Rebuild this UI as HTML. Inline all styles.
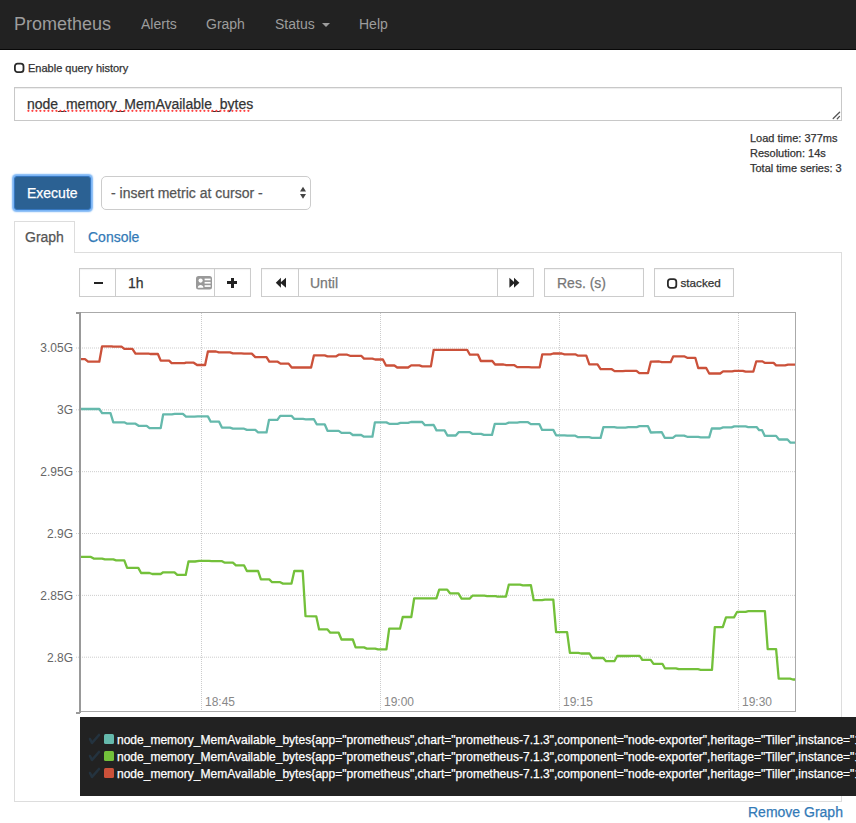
<!DOCTYPE html>
<html><head><meta charset="utf-8">
<style>
*{box-sizing:border-box;margin:0;padding:0}
html,body{width:856px;height:823px;overflow:hidden;background:#fff;font-family:"Liberation Sans",sans-serif;color:#333}
.a{-webkit-text-stroke:0.25px currentColor}
.ns{-webkit-text-stroke:0}
.a{position:absolute;white-space:nowrap}
#nav .a{-webkit-text-stroke:0}
#nav{position:absolute;left:0;top:0;width:856px;height:50px;background:#222;border-bottom:1px solid #080808}
.nl{position:absolute;font-size:14px;line-height:16px;color:#9d9d9d;top:16px}
.box{position:absolute;border:1px solid #ccc;background:#fff;box-shadow:inset 0 1px 1px rgba(0,0,0,.05)}
.t14{font-size:14px;line-height:16px}
.t11{font-size:11px;line-height:15px}
.t12{font-size:12px;line-height:14px}
</style></head><body>
<div id="nav">
  <div class="a" style="left:14px;top:14px;font-size:18px;line-height:20px;color:#9d9d9d">Prometheus</div>
  <div class="nl a" style="left:141px">Alerts</div>
  <div class="nl a" style="left:206px">Graph</div>
  <div class="nl a" style="left:275px">Status</div>
  <div class="a" style="left:322px;top:23px;width:0;height:0;border-left:4px solid transparent;border-right:4px solid transparent;border-top:4px solid #9d9d9d"></div>
  <div class="nl a" style="left:359px">Help</div>
</div>

<!-- query history checkbox -->
<svg class="a" style="left:13px;top:62px" width="13" height="13"><rect x="1.9" y="1.6" width="8.6" height="8.6" rx="2.6" fill="none" stroke="#2a2a2a" stroke-width="1.8"/></svg>
<div class="a t11" style="left:28px;top:61px">Enable query history</div>

<!-- textarea -->
<div class="box" style="left:14px;top:87px;width:828px;height:34px;border-color:#c8c8c8;box-shadow:inset 0 1px 1px rgba(0,0,0,.075)"></div>
<div class="a t14" style="left:27px;top:96px;color:#333">node_memory_MemAvailable_bytes</div>
<svg class="a" style="left:826px;top:106px" width="16" height="16"><g stroke="#555" stroke-width="1.3" stroke-linecap="round"><path d="M7.2,12.5 L13.6,6.3"/><path d="M11.3,12.7 L13.5,10.4"/></g></svg>
<svg class="a" style="left:26px;top:108px" width="230" height="6"><line x1="2.4" y1="2.8" x2="224" y2="2.8" stroke="#f44" stroke-width="2.2" stroke-linecap="round" stroke-dasharray="0,4"/></svg>

<!-- load info -->
<div class="a t11" style="left:750px;top:131px">Load time: 377ms</div>
<div class="a t11" style="left:750px;top:146px">Resolution: 14s</div>
<div class="a t11" style="left:750px;top:161px">Total time series: 3</div>

<!-- execute -->
<div class="a" style="left:14px;top:176px;width:77px;height:34px;background:#2b6193;border:1px solid #3677c0;border-radius:3px;box-shadow:0 0 1.5px 1.5px #79b4f5"></div>
<div class="a t14" style="left:27px;top:185px;color:#fff">Execute</div>

<!-- select -->
<div class="box" style="left:101px;top:176px;width:210px;height:34px;border-radius:5px;box-shadow:none"></div>
<div class="a t14" style="left:111px;top:185px;color:#555">- insert metric at cursor -</div>
<svg class="a" style="left:296px;top:184px" width="14" height="18"><path d="M4,7.6 L7,2.8 L10,7.6 Z M4,9.9 L10,9.9 L7,14.8 Z" fill="#444"/></svg>

<!-- tabs -->
<div class="a" style="left:14px;top:252px;width:828px;height:550px;border:1px solid #ddd"></div>
<div class="a" style="left:14px;top:221px;width:61px;height:32px;border:1px solid #ddd;border-bottom:0;background:#fff"></div>
<div class="a t14" style="left:25px;top:229px;color:#555">Graph</div>
<div class="a t14" style="left:88px;top:229px;color:#337ab7">Console</div>

<!-- controls -->
<div class="box" style="left:79px;top:268px;width:172px;height:29px"></div>
<div class="a" style="left:115px;top:268px;width:1px;height:29px;background:#ccc"></div>
<div class="a" style="left:214px;top:268px;width:1px;height:29px;background:#ccc"></div>
<div class="a t14" style="left:128px;top:275px;color:#333">1h</div>


<div class="box" style="left:261px;top:268px;width:273px;height:29px"></div>
<div class="a" style="left:298px;top:268px;width:1px;height:29px;background:#ccc"></div>
<div class="a" style="left:497px;top:268px;width:1px;height:29px;background:#ccc"></div>
<div class="a t14" style="left:310px;top:275px;color:#777">Until</div>

<div class="box" style="left:544px;top:268px;width:100px;height:29px"></div>
<div class="a t14" style="left:557px;top:275px;color:#777">Res. (s)</div>

<div class="box" style="left:654px;top:268px;width:80px;height:29px"></div>
<svg class="a" style="left:666px;top:277px" width="13" height="13"><rect x="1.9" y="2.2" width="8.4" height="8.6" rx="2.6" fill="none" stroke="#2a2a2a" stroke-width="1.8"/></svg>
<div class="a t11" style="left:680.5px;top:275px;font-size:11.7px">stacked</div>
<div class="a" style="left:94px;top:281.5px;width:8.5px;height:2.8px;background:#222"></div>
<div class="a" style="left:227.3px;top:281.4px;width:10px;height:2.8px;background:#222"></div>
<div class="a" style="left:231.2px;top:277.8px;width:2.8px;height:10px;background:#222"></div>
<svg class="a" style="left:196px;top:276px" width="16" height="14"><rect x="0" y="0" width="16" height="13.4" rx="2.5" fill="#999"/><circle cx="4.6" cy="4.6" r="2.1" fill="#fff"/><path d="M1.8,11.8 C1.8,8.2 7.4,8.2 7.4,11.8 Z" fill="#fff"/><rect x="8.6" y="2.6" width="6" height="1.7" fill="#fff"/><rect x="8.6" y="5.9" width="6" height="1.7" fill="#fff"/><rect x="8.6" y="9.2" width="6" height="1.7" fill="#fff"/></svg>
<svg class="a" style="left:275px;top:277px" width="12" height="12"><path d="M0.8,5.8 L5.9,0.8 L5.9,10.8 Z M5.2,5.8 L11,0.8 L11,10.8 Z" fill="#222"/></svg>
<svg class="a" style="left:509px;top:277px" width="12" height="12"><path d="M0.4,0.8 L5.9,5.8 L0.4,10.8 Z M5,0.8 L10.4,5.8 L5,10.8 Z" fill="#222"/></svg>

<!-- chart -->
<!--CHART--><svg class="a" style="left:0;top:0" width="856" height="823">
<line x1="76" y1="348.00" x2="796" y2="348.00" stroke="#000" stroke-opacity="0.2" stroke-width="1" stroke-dasharray="1,1" fill="none"/>
<line x1="76" y1="409.84" x2="796" y2="409.84" stroke="#000" stroke-opacity="0.2" stroke-width="1" stroke-dasharray="1,1" fill="none"/>
<line x1="76" y1="471.68" x2="796" y2="471.68" stroke="#000" stroke-opacity="0.2" stroke-width="1" stroke-dasharray="1,1" fill="none"/>
<line x1="76" y1="533.52" x2="796" y2="533.52" stroke="#000" stroke-opacity="0.2" stroke-width="1" stroke-dasharray="1,1" fill="none"/>
<line x1="76" y1="595.36" x2="796" y2="595.36" stroke="#000" stroke-opacity="0.2" stroke-width="1" stroke-dasharray="1,1" fill="none"/>
<line x1="76" y1="657.20" x2="796" y2="657.20" stroke="#000" stroke-opacity="0.2" stroke-width="1" stroke-dasharray="1,1" fill="none"/>
<line x1="201.5" y1="313" x2="201.5" y2="711" stroke="#000" stroke-opacity="0.2" stroke-width="1" stroke-dasharray="1,1" fill="none"/>
<line x1="380.5" y1="313" x2="380.5" y2="711" stroke="#000" stroke-opacity="0.2" stroke-width="1" stroke-dasharray="1,1" fill="none"/>
<line x1="559.5" y1="313" x2="559.5" y2="711" stroke="#000" stroke-opacity="0.2" stroke-width="1" stroke-dasharray="1,1" fill="none"/>
<line x1="738.5" y1="313" x2="738.5" y2="711" stroke="#000" stroke-opacity="0.2" stroke-width="1" stroke-dasharray="1,1" fill="none"/>
<rect x="79.5" y="312.5" width="716" height="399" fill="none" stroke="#aaa" stroke-width="1"/>
<rect x="79" y="312" width="2" height="401" fill="#999"/>
<rect x="76" y="312" width="4" height="2" fill="#999"/>
<rect x="76" y="712" width="4" height="2" fill="#999"/>
<clipPath id="cp"><rect x="81" y="313" width="714" height="398"/></clipPath>
<g clip-path="url(#cp)" fill="none" stroke-width="2.3" stroke-linejoin="round">
<path d="M80.1,359.2 L85.0,359.2 L88.1,361.7 L99.3,361.7 L102.1,346.3 L111.6,346.3 L113.0,346.7 L121.5,346.7 L124.3,348.8 L132.4,348.8 L135.5,353.7 L148.8,353.7 L150.2,354.0 L157.9,354.0 L160.7,360.6 L169.1,360.6 L171.6,363.1 L184.5,363.1 L186.0,362.7 L193.7,362.7 L197.1,365.0 L205.1,365.0 L207.9,351.5 L216.0,351.5 L218.8,352.3 L230.0,352.3 L232.9,353.3 L241.3,353.3 L244.1,353.6 L251.8,353.6 L255.3,357.1 L266.5,357.1 L269.3,361.7 L277.7,361.7 L280.5,363.6 L288.6,363.6 L291.7,367.5 L311.1,367.5 L313.9,355.4 L324.7,355.4 L327.5,356.4 L335.9,356.4 L338.7,354.7 L347.2,354.7 L350.0,355.8 L361.2,355.8 L364.0,358.6 L372.4,358.6 L375.2,359.5 L382.9,359.5 L386.0,365.5 L394.4,365.5 L397.2,367.5 L408.1,367.5 L411.2,365.4 L419.4,365.4 L422.2,366.4 L430.9,366.4 L433.7,349.8 L467.1,349.8 L469.9,354.7 L478.0,354.7 L480.8,361.0 L492.3,361.0 L495.1,364.5 L503.5,364.5 L506.3,365.2 L514.4,365.2 L517.2,367.1 L528.7,367.1 L531.5,367.3 L539.7,367.3 L542.3,354.3 L550.5,354.3 L553.3,353.5 L561.7,353.5 L564.5,354.3 L575.3,354.3 L578.1,355.7 L586.3,355.7 L589.3,364.3 L597.5,364.3 L600.6,369.2 L611.8,369.2 L614.6,371.1 L622.7,371.1 L625.5,370.8 L636.5,370.8 L639.3,373.1 L648.0,373.1 L650.8,361.7 L659.2,361.5 L661.8,362.2 L670.6,362.2 L673.3,356.3 L684.1,356.3 L687.2,357.8 L695.3,357.8 L698.2,368.0 L706.2,368.0 L709.2,373.5 L720.2,373.5 L723.1,371.3 L732.1,371.3 L734.6,370.8 L742.8,370.8 L745.6,371.7 L753.3,371.7 L756.3,361.3 L762.1,361.3 L765.1,362.9 L773.6,362.9 L776.1,365.4 L785.1,365.4 L788.0,364.7 L796.0,364.7" stroke="#cb513a"/>
<path d="M80.1,409.0 L99.3,409.0 L102.1,413.2 L110.5,413.2 L113.3,422.3 L124.3,422.3 L127.1,423.7 L135.5,423.7 L138.6,425.8 L146.7,425.8 L149.5,428.1 L160.7,428.1 L163.2,414.3 L171.9,414.3 L174.7,413.9 L182.9,413.9 L186.0,416.7 L194.4,416.7 L197.8,416.4 L207.9,416.4 L210.7,421.7 L219.1,421.7 L221.9,427.6 L230.0,427.6 L232.9,428.7 L244.1,428.7 L246.9,429.9 L255.3,429.9 L258.1,432.4 L266.5,432.4 L269.0,419.9 L277.4,419.9 L280.2,415.8 L291.5,415.8 L294.3,418.9 L303.0,418.9 L305.8,419.3 L313.9,419.2 L316.7,424.3 L324.7,424.3 L327.5,430.8 L338.7,430.8 L341.5,432.9 L350.0,432.9 L352.8,435.0 L361.2,435.0 L364.0,436.7 L372.4,436.7 L374.9,422.4 L386.4,422.4 L389.2,423.8 L397.6,423.8 L400.4,422.9 L408.1,422.9 L410.9,422.0 L422.2,422.0 L425.0,425.2 L433.7,425.0 L436.5,430.4 L444.6,430.4 L447.4,435.5 L455.8,435.5 L458.6,432.2 L469.9,432.2 L472.7,433.9 L481.1,433.9 L483.9,434.9 L492.0,434.9 L494.8,423.8 L506.0,423.8 L508.8,422.6 L517.2,422.6 L520.0,422.2 L528.0,422.2 L530.8,424.1 L539.3,424.1 L542.1,429.9 L553.3,429.9 L556.1,435.3 L564.5,435.3 L567.3,435.7 L575.3,435.7 L578.1,437.2 L589.1,437.2 L591.9,437.9 L600.6,437.9 L603.4,427.1 L614.3,427.1 L617.1,427.6 L625.5,427.6 L628.3,427.2 L636.7,427.2 L639.5,426.2 L648.0,426.2 L650.8,432.5 L661.8,432.2 L664.7,437.8 L672.8,437.8 L675.7,435.6 L684.1,435.6 L687.2,436.8 L698.2,436.8 L700.7,437.3 L709.2,437.3 L711.8,428.5 L720.2,428.5 L723.1,427.4 L731.6,427.4 L734.3,426.4 L745.6,426.4 L748.2,427.1 L756.6,427.1 L759.2,430.2 L762.1,430.2 L764.8,435.9 L776.1,435.9 L779.0,439.5 L787.5,439.5 L790.5,442.7 L796.0,442.7" stroke="#65b9ac"/>
<path d="M80.1,556.9 L90.9,556.9 L93.7,558.6 L102.1,558.6 L104.9,559.4 L113.3,559.4 L116.1,560.4 L124.3,560.4 L127.1,567.9 L138.3,567.9 L141.1,573.0 L149.5,573.0 L152.3,574.0 L160.7,574.0 L163.2,572.3 L174.5,572.3 L177.3,574.9 L185.7,574.9 L188.5,561.4 L195.0,561.5 L199.2,560.8 L209.0,560.8 L211.8,561.1 L221.6,561.1 L224.4,562.6 L232.9,562.6 L235.9,565.4 L244.1,565.4 L246.9,571.0 L258.1,571.0 L260.9,579.4 L269.3,579.4 L272.1,582.2 L280.2,582.2 L283.0,583.6 L291.5,583.6 L294.3,571.0 L302.7,571.0 L305.5,616.2 L316.3,616.4 L319.1,629.4 L327.5,629.4 L330.3,632.7 L338.7,632.7 L341.5,639.5 L352.8,639.5 L355.6,647.4 L364.0,647.4 L366.8,648.6 L375.2,648.6 L378.0,649.3 L386.4,649.3 L389.2,628.7 L400.0,628.7 L402.8,616.8 L411.3,617.0 L414.2,598.3 L436.4,598.3 L439.2,589.6 L447.2,589.6 L450.0,593.3 L458.4,593.3 L461.6,598.7 L469.6,598.7 L472.4,595.7 L484.3,595.7 L487.1,596.1 L495.5,596.1 L497.6,596.6 L506.0,596.6 L508.8,584.7 L520.0,584.7 L522.9,585.4 L530.9,585.2 L533.7,600.2 L542.1,600.2 L544.9,599.7 L553.3,599.7 L556.1,632.2 L567.1,632.2 L569.9,652.8 L578.3,652.8 L581.1,653.5 L589.5,653.5 L592.3,658.0 L603.2,658.0 L606.0,661.2 L614.4,661.2 L617.2,656.0 L628.7,656.0 L631.5,655.8 L639.7,655.8 L642.3,659.9 L650.7,659.9 L653.5,663.8 L662.4,663.8 L664.9,668.3 L675.9,668.3 L678.7,669.2 L697.9,669.2 L700.7,669.8 L712.0,669.8 L714.8,627.1 L722.8,627.1 L726.0,617.4 L734.0,617.4 L737.2,611.8 L745.6,611.8 L748.4,611.1 L764.9,611.1 L767.7,649.2 L776.1,649.2 L778.7,678.6 L790.1,678.6 L792.9,679.5 L796.0,679.5" stroke="#73c03a"/>
</g>
</svg><!--/CHART-->

<!-- legend -->
<div class="a" style="left:80px;top:717px;width:776px;height:79px;background:#222"></div>
<div class="a t12" style="left:117px;top:732.3px;color:#fff;line-height:17px;font-size:12.03px">node_memory_MemAvailable_bytes{app="prometheus",chart="prometheus-7.1.3",component="node-exporter",heritage="Tiller",instance="10.0.0.1:9100"}<br>node_memory_MemAvailable_bytes{app="prometheus",chart="prometheus-7.1.3",component="node-exporter",heritage="Tiller",instance="10.0.0.2:9100"}<br>node_memory_MemAvailable_bytes{app="prometheus",chart="prometheus-7.1.3",component="node-exporter",heritage="Tiller",instance="10.0.0.3:9100"}</div>
<div class="a" style="left:104px;top:734px;width:10px;height:10px;border-radius:1.5px;background:#65b9ac"></div>
<div class="a" style="left:104px;top:751px;width:10px;height:10px;border-radius:1.5px;background:#73c03a"></div>
<div class="a" style="left:104px;top:768px;width:10px;height:10px;border-radius:1.5px;background:#cb513a"></div>
<svg class="a" style="left:86px;top:730px" width="18" height="52">
<g fill="none" stroke="#24333f" stroke-width="2.6" stroke-linecap="round" stroke-linejoin="round">
<path d="M4,9 L6,13 L13,5"/><path d="M4,26 L6,30 L13,22"/><path d="M4,43 L6,47 L13,39"/>
</g></svg>

<div class="a t12 ns" style="left:32px;top:341px;width:41px;text-align:right;color:#666">3.05G</div>
<div class="a t12 ns" style="left:32px;top:403px;width:41px;text-align:right;color:#666">3G</div>
<div class="a t12 ns" style="left:32px;top:465px;width:41px;text-align:right;color:#666">2.95G</div>
<div class="a t12 ns" style="left:32px;top:527px;width:41px;text-align:right;color:#666">2.9G</div>
<div class="a t12 ns" style="left:32px;top:589px;width:41px;text-align:right;color:#666">2.85G</div>
<div class="a t12 ns" style="left:32px;top:651px;width:41px;text-align:right;color:#666">2.8G</div>
<div class="a t12 ns" style="left:205px;top:695px;color:#888">18:45</div>
<div class="a t12 ns" style="left:384px;top:695px;color:#888">19:00</div>
<div class="a t12 ns" style="left:563px;top:695px;color:#888">19:15</div>
<div class="a t12 ns" style="left:742px;top:695px;color:#888">19:30</div>

<div class="a t14" style="left:748px;top:804px;color:#337ab7">Remove Graph</div>
</body></html>
